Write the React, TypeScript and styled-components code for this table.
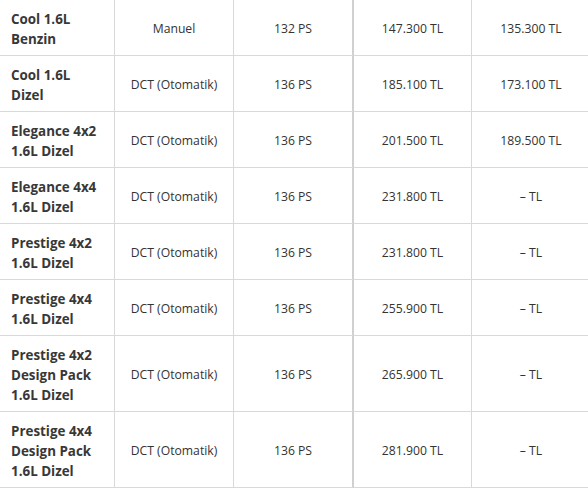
import React from "react";
import styled, { createGlobalStyle } from "styled-components";

const Global = createGlobalStyle`
  html, body { margin: 0; padding: 0; background: #fff; }
  body { font-family: "Open Sans", "Noto Sans", sans-serif; color: #333; }
  * { box-sizing: border-box; }
`;

const Grid = styled.div`
  display: grid;
  grid-template-columns: 115px 119px 120px 118px 118px;
  width: 590px;
`;

const Cell = styled.div<{ $thick?: boolean; $last?: boolean }>`
  display: flex;
  align-items: center;
  justify-content: center;
  text-align: center;
  padding: 9px 10px 6px;
  line-height: 20px;
  font-size: 12.2px;
  color: #333;
  border-bottom: 1px solid #d9d9d9;
  border-right: ${(p) =>
    p.$last ? "none" : p.$thick ? "2px solid #d0d0d0" : "1px solid #d9d9d9"};
`;

const NameCell = styled(Cell)`
  justify-content: flex-start;
  text-align: left;
  padding-left: 11px;
  font-size: 13.4px;
  font-weight: 700;
  color: #383838;
`;

type Item = { name: string[]; gear: string; ps: string; price: string; campaign: string };

const rows: Item[] = [
  { name: ["Cool 1.6L", "Benzin"], gear: "Manuel", ps: "132 PS", price: "147.300 TL", campaign: "135.300 TL" },
  { name: ["Cool 1.6L", "Dizel"], gear: "DCT (Otomatik)", ps: "136 PS", price: "185.100 TL", campaign: "173.100 TL" },
  { name: ["Elegance 4x2", "1.6L Dizel"], gear: "DCT (Otomatik)", ps: "136 PS", price: "201.500 TL", campaign: "189.500 TL" },
  { name: ["Elegance 4x4", "1.6L Dizel"], gear: "DCT (Otomatik)", ps: "136 PS", price: "231.800 TL", campaign: "– TL" },
  { name: ["Prestige 4x2", "1.6L Dizel"], gear: "DCT (Otomatik)", ps: "136 PS", price: "231.800 TL", campaign: "– TL" },
  { name: ["Prestige 4x4", "1.6L Dizel"], gear: "DCT (Otomatik)", ps: "136 PS", price: "255.900 TL", campaign: "– TL" },
  { name: ["Prestige 4x2", "Design Pack", "1.6L Dizel"], gear: "DCT (Otomatik)", ps: "136 PS", price: "265.900 TL", campaign: "– TL" },
  { name: ["Prestige 4x4", "Design Pack", "1.6L Dizel"], gear: "DCT (Otomatik)", ps: "136 PS", price: "281.900 TL", campaign: "– TL" },
];

export default function App() {
  return (
    <>
      <Global />
      <Grid>
        {rows.map((r, i) => (
          <React.Fragment key={i}>
            <NameCell>
              <div>
                {r.name.map((n, j) => (
                  <React.Fragment key={j}>
                    {j > 0 && <br />}
                    {n}
                  </React.Fragment>
                ))}
              </div>
            </NameCell>
            <Cell>{r.gear}</Cell>
            <Cell $thick>{r.ps}</Cell>
            <Cell>{r.price}</Cell>
            <Cell $last>{r.campaign}</Cell>
          </React.Fragment>
        ))}
      </Grid>
    </>
  );
}
